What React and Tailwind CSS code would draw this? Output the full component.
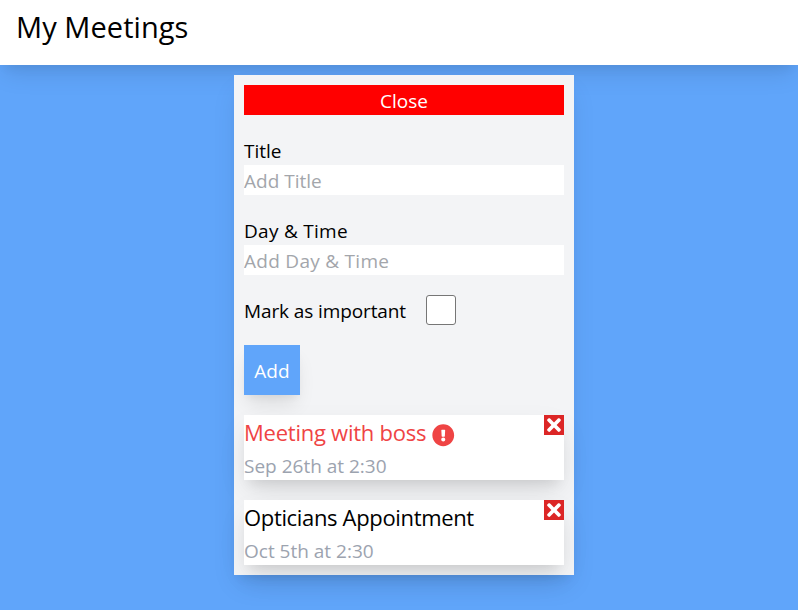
import { FaExclamationCircle, FaTimes } from "react-icons/fa";

const meetings = [
  { title: "Meeting with boss", time: "Sep 26th at 2:30", important: true, tracking: "tracking-[-0.24px]" },
  { title: "Opticians Appointment", time: "Oct 5th at 2:30", important: false, tracking: "tracking-[-0.34px]" },
];

function Field({ label, placeholder, tracking = "" }) {
  return (
    <label className="mt-5 block">
      <span className={`block h-[30px] pt-px ${tracking}`}>{label}</span>
      <input
        placeholder={placeholder}
        className={`block h-[30px] w-full bg-white p-0 pt-0.5 placeholder:text-[#a3a6ab] ${tracking}`}
      />
    </label>
  );
}

function Meeting({ title, time, important, tracking }) {
  return (
    <article className="mt-5 flex h-[65px] justify-between bg-white shadow-[0_12.5px_31px_-4px_rgba(0,0,0,0.1),0_10px_12.5px_-6px_rgba(0,0,0,0.1)]">
      <div>
        <h2
          className={`flex h-[35px] items-center whitespace-nowrap text-[22px] leading-[35px] ${important ? "text-[#ef4444]" : "text-black"}`}
        >
          <span className={tracking}>{title}</span>
          {important && <FaExclamationCircle className="ml-1.5 mt-1.5 size-[22.5px]" />}
        </h2>
        <p className="h-[30px] pt-px text-[#9ca3af]">{time}</p>
      </div>
      <button aria-label="Delete" className="flex size-5 items-center justify-center bg-[#dc2626] text-white">
        <FaTimes className="size-5" />
      </button>
    </article>
  );
}

export default function App() {
  return (
    <div className="h-[610px] overflow-hidden bg-[#60a5fa] font-['Open_Sans',sans-serif] text-[19px] leading-[30px] text-black">
      <header className="h-[65px] bg-white px-4 pt-2 shadow-[0_12.5px_25px_-4px_rgba(0,0,0,0.1),0_8px_10px_-5px_rgba(0,0,0,0.06)]">
        <h1 className="text-[29px] leading-[38px] tracking-[0.06px]">My Meetings</h1>
      </header>
      <main className="ml-[234px] mt-2.5 h-[500px] w-[340px] bg-[#f3f4f6] p-2.5 shadow-[0_12.5px_25px_-4px_rgba(0,0,0,0.1),0_8px_10px_-5px_rgba(0,0,0,0.06)]">
        <button className="block h-[30px] w-full bg-[#ff0000] pt-px text-white">Close</button>
        <Field label="Title" placeholder="Add Title" />
        <Field label="Day & Time" placeholder="Add Day & Time" tracking="tracking-[0.28px]" />
        <div className="mt-5 flex h-[30px]">
          <span className="w-[182px] whitespace-nowrap pt-px tracking-[-0.11px]">Mark as important</span>
          <input
            type="checkbox"
            aria-label="Mark as important"
            className="size-[30px] appearance-none rounded-[3px] border border-[#767676] bg-white"
          />
        </div>
        <button className="mt-5 block h-[50px] w-14 bg-[#60a5fa] pt-0.5 text-white shadow-[0_12.5px_19px_-4px_rgba(0,0,0,0.1),0_5px_7.5px_-2.5px_rgba(0,0,0,0.05)]">
          Add
        </button>
        {meetings.map((meeting) => (
          <Meeting key={meeting.title} {...meeting} />
        ))}
      </main>
    </div>
  );
}
